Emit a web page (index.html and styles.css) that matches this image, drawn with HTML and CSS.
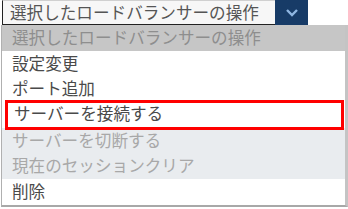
FILE: index.html
```html
<!DOCTYPE html>
<html lang="ja">
<head>
    <meta charset="UTF-8">
    <title>ロードバランサーの操作</title>
    <link rel="stylesheet" href="styles.css">
</head>
<body>

<div class="picker">
    <div class="select">
        <div class="select-value">選択したロードバランサーの操作</div>
        <div class="select-btn">
            <svg width="14" height="9" viewBox="0 0 14 9">
                <path d="M2 2 L7 7 L12 2" fill="none" stroke="#8fb6e2" stroke-width="2.4"/>
            </svg>
        </div>
    </div>

    <ul class="menu">
        <li class="item placeholder">選択したロードバランサーの操作</li>
        <li class="item">設定変更</li>
        <li class="item">ポート追加</li>
        <li class="item marked">サーバーを接続する</li>
        <li class="item disabled">サーバーを切断する</li>
        <li class="item disabled">現在のセッションクリア</li>
        <li class="item">削除</li>
    </ul>
</div>

</body>
</html>
```

FILE: styles.css
```css
body {
    margin: 0;
    padding: 0;
    background-color: #ffffff;
    font-family: "Noto Sans CJK JP", "Noto Sans", sans-serif;
    color: #4a4a4a;
}
.picker {
    width: 348px;
}
.select {
    display: flex;
    width: 306px;
    height: 25px;
    margin-left: 2px;
}
.select-value {
    flex: 1;
    background-color: #f7f7f7;
    border-left: 1px solid #222222;
    border-bottom: 1px solid #222222;
    border-top: 1px solid #d0d0d0;
    padding-left: 7px;
    font-size: 16.6px;
    line-height: 23px;
    color: #555555;
    white-space: nowrap;
    overflow: hidden;
}
.select-btn {
    width: 33px;
    background-color: #173b67;
    display: flex;
    align-items: center;
    justify-content: center;
}
.menu {
    list-style: none;
    margin: 0 0 0 1px;
    padding: 0;
    width: 343px;
    border-left: 1px solid #b0b0b0;
    border-right: 3px solid #c4c4c4;
    border-bottom: 2px solid #a8a8a8;
}
.item {
    height: 25.6px;
    line-height: 25px;
    padding-left: 10px;
    font-size: 16.6px;
    white-space: nowrap;
    box-sizing: border-box;
}
.placeholder {
    background-color: #c6c6c6;
    color: #8e8e8e;
}
.disabled {
    background-color: #e9ecef;
    color: #a8a8a8;
}
.marked {
    border: 3px solid #ff0000;
    margin: 0 1px 0 3px;
    padding-left: 6px;
    line-height: 20px;
    height: 30px;
    margin-top: -2px;
    margin-bottom: -2px;
    position: relative;
}
```
